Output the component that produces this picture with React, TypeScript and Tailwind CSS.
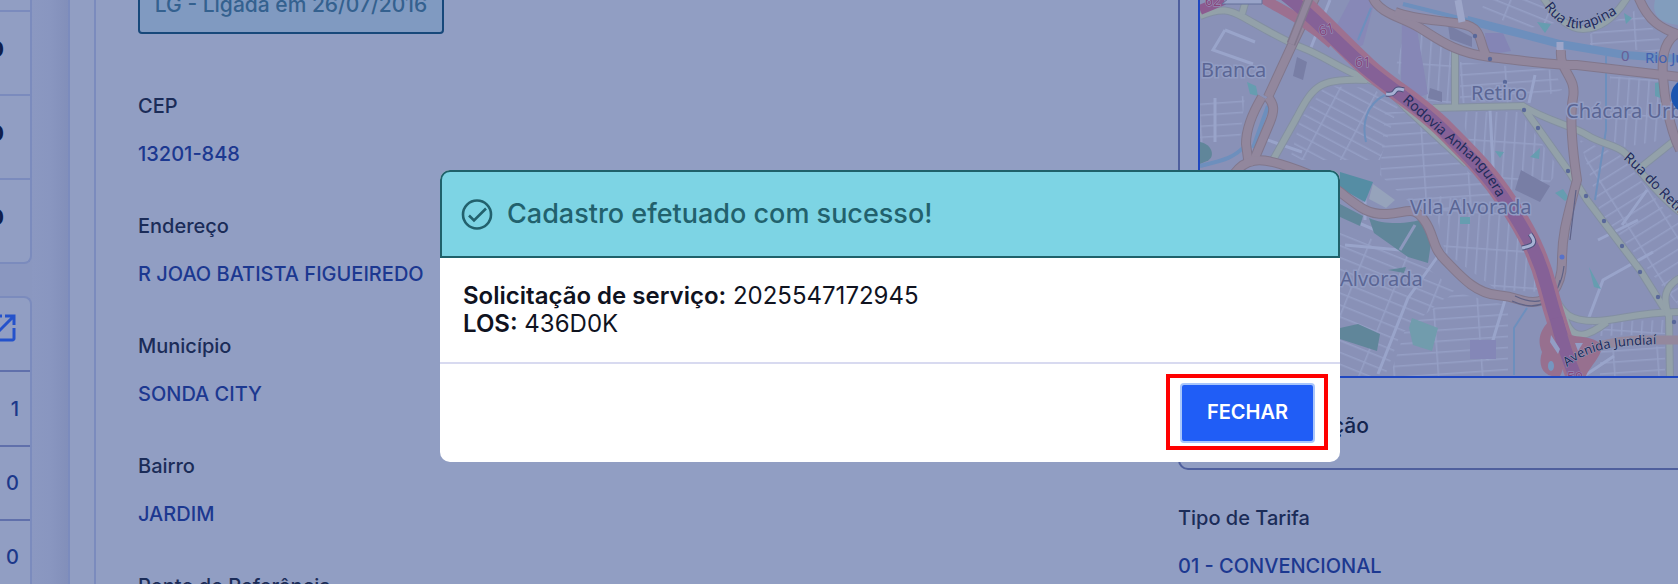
import React from "react";
import { MdOpenInNew } from "react-icons/md";

const details = [
  { label: "CEP", value: "13201-848" },
  { label: "Endereço", value: "R JOAO BATISTA FIGUEIREDO" },
  { label: "Município", value: "SONDA CITY" },
  { label: "Bairro", value: "JARDIM" },
  { label: "Ponto de Referência", value: "" },
];

function Field({ label, value }: { label: string; value: string }) {
  return (
    <div className="flex flex-col gap-6 text-[20px] leading-6 font-medium whitespace-nowrap">
      <dt className="text-[#1b2c58]">{label}</dt>
      <dd className="min-h-6 text-[#1c3890]">{value}</dd>
    </div>
  );
}

function SideTables() {
  return (
    <aside className="flex w-8 shrink-0 flex-col gap-8">
      <div className="h-[264px] overflow-hidden rounded-br-lg border-r-2 border-b-2 border-[#7b8bbd] bg-[#919ec3]">
        <div className="h-3 border-b-2 border-[#7b8bbd]" />
        {[0, 1, 2].map((row) => (
          <div
            key={row}
            className="flex h-[84px] items-center justify-end border-b-2 border-[#7b8bbd] pr-[26px] pb-2 text-[22px] font-bold text-[#0f1f4d]"
          >
            0
          </div>
        ))}
      </div>
      <div className="h-[300px] overflow-hidden rounded-tr-lg border-t-2 border-r-2 border-[#7b8bbd] bg-[#919ec3]">
        <a
          href="#abrir"
          aria-label="Abrir"
          className="flex h-[74px] items-center justify-end border-b-2 border-[#6070ab] pr-[10px] pb-3 text-[#2452cb]"
        >
          <MdOpenInNew className="size-9 shrink-0" />
        </a>
        <table className="w-full text-right text-[20px] font-medium text-[#1c388a]">
          <tbody>
            {["1", "0", "0"].map((n, i) => (
              <tr key={i} className="h-[74px] border-b-2 border-[#6070ab]">
                <td className="pr-[11px]">{n}</td>
              </tr>
            ))}
          </tbody>
        </table>
      </div>
    </aside>
  );
}

const majorRoads = [
  "M1315 -2 L1293 43 L1268 97",
  "M1262 97 C1253 112 1246 128 1246 144 L1249 166",
  "M1268 97 C1274 104 1275 110 1270 122 L1254 160",
  "M1234 174 C1246 158 1260 158 1280 164 S1322 178 1340 192 S1367 215 1387 214 S1413 205 1424 220 S1431 246 1445 260 S1474 293 1497 295 S1519 302 1533 302 S1562 289 1562 262 S1566 222 1577 180 C1574 160 1569 120 1573 98 S1559 72 1561 50",
  "M1373 -2 C1380 14 1402 17 1420 28 S1455 53 1490 57 S1560 66 1577 65 L1680 77",
  "M1395 12 C1415 20 1440 20 1462 24 S1478 42 1487 57",
  "M1638 -4 C1648 22 1662 29 1680 35",
  "M1676 34 C1662 44 1662 62 1663 77 S1668 125 1680 150",
];

const minorRoads = [
  "M1200 16 C1222 7 1230 10 1243 17 S1282 40 1303 48 S1346 72 1367 79 S1394 96 1405 107 L1467 164",
  "M1273 160 L1297 117 C1315 82 1322 79 1367 80",
  "M1246 0 L1242 14",
  "M1455 52 L1455 107",
  "M1433 108 L1523 106 C1545 120 1573 126 1587 135 S1617 145 1625 153 S1652 190 1680 212",
  "M1523 107 L1570 173 L1587 200 L1640 270 L1669 316 L1670 380",
  "M1640 168 L1680 136",
  "M1552 290 C1562 316 1571 321 1595 321 S1635 312 1680 312",
  "M1565 318 C1572 344 1590 335 1607 322",
  "M1680 278 C1665 286 1662 298 1669 316",
  "M1543 -3 C1556 18 1570 29 1583 29 S1612 22 1627 -2",
];

function StreetMap() {
  return (
    <svg
      viewBox="1200 0 478 376"
      preserveAspectRatio="xMinYMin slice"
      className="block h-[376px] w-full"
      fontFamily="'Noto Sans', sans-serif"
      role="img"
      aria-label="Mapa"
    >
      <defs>
        <pattern id="gridA" width="10" height="34" patternUnits="userSpaceOnUse" patternTransform="rotate(-62)">
          <path d="M0 0H10M0 0V34" stroke="#959fc5" strokeWidth="3" fill="none" />
        </pattern>
        <pattern id="gridB" width="40" height="11" patternUnits="userSpaceOnUse" patternTransform="rotate(22)">
          <path d="M0 0H40M0 0V11" stroke="#959fc5" strokeWidth="3" fill="none" />
        </pattern>
        <pattern id="gridC" width="10" height="36" patternUnits="userSpaceOnUse" patternTransform="rotate(4)">
          <path d="M0 0H10M0 0V36" stroke="#959fc5" strokeWidth="3" fill="none" />
        </pattern>
        <pattern id="gridD" width="36" height="11" patternUnits="userSpaceOnUse" patternTransform="rotate(-32)">
          <path d="M0 0H36M0 0V11" stroke="#959fc5" strokeWidth="3" fill="none" />
        </pattern>
        <pattern id="gridE" width="44" height="11" patternUnits="userSpaceOnUse" patternTransform="rotate(-4)">
          <path d="M0 0H44M0 0V11" stroke="#959fc5" strokeWidth="3" fill="none" />
        </pattern>
      </defs>
      <rect x="1200" width="700" height="376" fill="#8991b7" />

      {/* residential street grids */}
      <path d="M1200 98L1245 96 1240 140 1200 146Z" fill="url(#gridE)" />
      <path d="M1300 120L1325 86 1372 88 1398 106 1380 160 1290 160Z" fill="url(#gridA)" />
      <path d="M1385 112L1405 112 1490 192 1500 215 1420 212 1380 175Z" fill="url(#gridE)" />
      <path d="M1408 20L1452 48 1452 104 1425 100 1395 70Z" fill="url(#gridC)" />
      <path d="M1460 62L1555 70 1562 90 1525 103 1460 103Z" fill="url(#gridE)" />
      <path d="M1460 112L1520 112 1560 170 1545 188 1505 190 1470 145Z" fill="url(#gridC)" />
      <path d="M1485 0H1545L1560 22 1530 28 1480 14Z" fill="url(#gridB)" />
      <path d="M1590 34L1640 8 1660 40V52L1590 46Z" fill="url(#gridE)" />
      <path d="M1610 76L1660 80 1664 140 1625 147 1610 140Z" fill="url(#gridC)" />
      <path d="M1580 140L1620 155 1665 210 1678 220V305L1600 212Z" fill="url(#gridD)" />
      <path d="M1340 224L1420 262 1455 290 1400 335 1385 376H1340Z" fill="url(#gridB)" />
      <path d="M1432 195L1508 206 1530 250 1545 292 1497 290 1445 252Z" fill="url(#gridC)" />
      <path d="M1455 292L1508 306 1508 376H1390L1405 330Z" fill="url(#gridE)" />
      <path d="M1600 350L1665 346V376H1600Z" fill="url(#gridE)" />
      <path d="M1590 322L1665 320V334L1600 336Z" fill="url(#gridC)" />
      <g fill="none" stroke="#99a4ca" strokeWidth="3">
        <path d="M1225 30l-12 20 40 14M1225 30l30 12M1340 215l56 24 22-6M1438 256l-30 42-30 76M1365 182v38M1402 250l24-34M1584 376l30-20M1345 245l55 5M1622 225l25-35M1598 240l40-20M1588 320l15-40 50-28M1505 300l-18 60M1330 0l-20 50M1490 110l4 75M1262 138l40 14M1215 98v44M1535 75l-6 28" />
      </g>

      {/* parks and land use */}
      <path d="M1350 0h25l-12 45-18 8-15-15z" fill="#8788b7" />
      <path d="M1402 24h14l12 70-12 4-15-18z" fill="#8687b6" />
      <path d="M1485 33h18l8 18-24 4z" fill="#8485b5" />
      <g fill="#787ea5">
        <path d="M1448 25l24 12v10l-22-8z" />
        <path d="M1297 57l10 5-4 18-10-4z" />
        <path d="M1521 170l29 16-10 16-25-12z" />
        <path d="M1430 88l12 4v10l-14-4z" />
      </g>
      <g fill="#60869a">
        <path d="M1200 142c12 2 16 15 7 19l-7 3z" />
        <path d="M1340 204l23 12-3 10-20-9z" />
        <path d="M1369 218c16 8 45 5 53 1l9 24-3 20-20-6-34-24z" />
        <path d="M1340 328l18-4 22 10-3 17-37-12z" />
        <path d="M1388 270l18-3-2 6z" />
      </g>
      <path d="M1415 225L1400 250" stroke="#8d98bd" strokeWidth="3" />
      <path d="M1340 172l33 10-8 20-25-14z" fill="#558da4" />
      <path d="M1373 184l22 16-9 8-17-9z" fill="#96a3bb" />
      <path d="M1412 318l26 10-6 23-19-6-4-17z" fill="#719cad" />
      <g fill="#669db0">
        <path d="M1537 22l14 2-6 9z" />
        <path d="M1624 13l8 5-6 6z" />
        <path d="M1247 82l9 4 2 10-8-2z" />
        <path d="M1530 157l10-9-1 11z" />
        <path d="M1460 217h10v7h-10z" />
        <path d="M1555 193l8-4 6 9-4 3z" />
        <path d="M1589 267l12 22-7-2z" />
        <path d="M1495 151l9 1-4 6z" />
        <path d="M1655 83l6-1 2 17-8-3z" />
      </g>
      <path d="M1470 340h26v19h-26z" fill="#8487b7" />
      <path d="M1655 0c-4 16 6 23 23 25V0z" fill="#829dbd" />

      {/* water */}
      <g fill="none" stroke="#6d8fbd">
        <path d="M1403 4L1467 20" strokeWidth="4" />
        <path d="M1467 20L1510 31 1560 44 1625 55 1680 59" strokeWidth="8" />
        <path d="M1200 166C1225 160 1234 158 1247 144M1268 106L1253 148" strokeWidth="4" />
        <path d="M1371 8L1358 40M1606 56L1606 130 1595 200M1385 95C1365 105 1362 125 1366 142M1527 308L1514 328V375" strokeWidth="2" />
      </g>

      {/* secondary and primary roads */}
      <g fill="none" stroke="#838fa2" strokeWidth="8">
        {minorRoads.map((d) => <path key={d} d={d} />)}
      </g>
      <g fill="none" stroke="#93a1a9" strokeWidth="6">
        {minorRoads.map((d) => <path key={d} d={d} />)}
      </g>
      <g fill="none" stroke="#81778c" strokeWidth="10">
        {majorRoads.map((d) => <path key={d} d={d} />)}
      </g>
      <g fill="none" stroke="#92879d" strokeWidth="8">
        {majorRoads.map((d) => <path key={d} d={d} />)}
      </g>
      <path d="M1569 362C1592 346 1610 341 1640 340H1680" fill="none" stroke="#94889d" strokeWidth="9" />
      <path d="M1515 296C1540 308 1560 300 1564 266M1512 301C1538 313 1556 301 1560 280M1570 240L1576 190" fill="none" stroke="#5e6287" strokeWidth="1.2" />

      {/* highway */}
      <g fill="none">
        <path d="M1262 -2C1285 12 1305 20 1332 44" stroke="#9c7090" strokeWidth="10" />
        <path d="M1200 10L1224 0" stroke="#8c5b90" strokeWidth="10" />
        <path d="M1290 -8C1312 12 1342 44 1367 67S1417 102 1445 130S1489 174 1508 203S1539 256 1547 287S1562 340 1577 380" stroke="#9e7190" strokeWidth="20" />
        <path d="M1284 -6C1312 15 1342 48 1367 69S1417 104 1445 132S1489 176 1508 205S1539 256 1547 287S1562 340 1577 380" stroke="#856197" strokeWidth="13" />
        <path d="M1310 -4L1291 44" stroke="#81778c" strokeWidth="9" />
        <path d="M1310 -4L1291 44" stroke="#92879d" strokeWidth="6" />
      </g>
      <path
        fill="#97708f"
        d="M1550 320C1538 332 1538 342 1542 352C1538 364 1542 374 1552 376H1560C1566 366 1560 356 1566 376H1586C1590 366 1606 352 1600 344C1594 336 1580 338 1566 334Z"
      />
      <path d="M1556 318C1561 338 1568 360 1577 380" fill="none" stroke="#856197" strokeWidth="13" />
      <g fill="#929dc5">
        <path d="M1551 335l9 14-2 5-8-12zM1575 343h8l-5 8z" />
      </g>
      <ellipse cx="1551" cy="366" rx="3" ry="5" fill="#7596c0" />
      <g fill="none" stroke="#4c527d" strokeWidth="5">
        <path d="M1386 94C1400 96 1390 86 1404 90M1522 248C1532 246 1538 244 1530 234" />
      </g>
      <g fill="none" stroke="#a6b1d4" strokeWidth="3">
        <path d="M1386 94C1400 96 1390 86 1404 90M1522 248C1532 246 1538 244 1530 234" />
      </g>
      <path d="M1458 0L1462 22M1560 42V50" stroke="#9da6c9" strokeWidth="7" />
      <g fill="#59689a">
        {[[1475, 36], [1490, 59], [1505, 82], [1524, 110], [1538, 128], [1568, 171], [1586, 196], [1604, 221], [1622, 246], [1640, 272], [1658, 297], [1674, 322]].map(([x, y]) => (
          <circle key={x} cx={x} cy={y} r="2.2" />
        ))}
      </g>
      <circle cx="1562" cy="257" r="2.5" fill="#5772ca" />

      {/* labels */}
      <g fill="#5b6694" stroke="#929dc4" strokeWidth="3" paintOrder="stroke" fontSize="20">
        <text x="1201" y="77">Branca</text>
        <text x="1471" y="100">Retiro</text>
        <text x="1566" y="118">Chácara Urbana</text>
        <text x="1410" y="214">Vila Alvorada</text>
        <text x="1340" y="286">Alvorada</text>
      </g>
      <g fill="#87467b" stroke="#989bc0" strokeWidth="1" paintOrder="stroke" fontSize="14">
        <text x="1320" y="36" transform="rotate(-14 1320 36)">61</text>
        <text x="1355" y="67">61</text>
        <text x="1567" y="382">50</text>
        <text x="1205" y="6">62</text>
      </g>
      <path d="M1229 -2H1262V4H1222Z" fill="#98a3c8" stroke="#65719b" />
      <text x="1621" y="61" fontSize="15" fill="#685f96">0</text>
      <text x="1645" y="63" fontSize="15" fill="#4261b0">Rio Jundiaí</text>
      <defs>
        <path id="labelAnhanguera" d="M1402 101C1430 126 1455 148 1470 160S1488 185 1520 232" />
        <path id="labelItrapina" d="M1544 7C1568 38 1590 36 1640 -3" />
        <path id="labelRetiro" d="M1623 159C1640 173 1654 191 1690 224" />
        <path id="labelJundiai" d="M1567 367C1588 350 1610 344 1680 344" />
      </defs>
      <g fill="#222b5a" stroke="#939fbc" strokeWidth="1" paintOrder="stroke" fontSize="14">
        <text stroke="none"><textPath href="#labelAnhanguera">Rodovia Anhanguera</textPath></text>
        <text><textPath href="#labelItrapina">Rua Itirapina</textPath></text>
        <text><textPath href="#labelRetiro">Rua do Retiro</textPath></text>
        <text fontSize="13"><textPath href="#labelJundiai">Avenida Jundiaí</textPath></text>
      </g>
      <circle cx="1688" cy="96" r="17" fill="#1c55b0" />
    </svg>
  );
}

function SuccessDialog() {
  return (
    <div className="fixed inset-0 flex items-start justify-center pt-[170px] pl-[102px]">
      <div
        role="dialog"
        aria-modal="true"
        aria-labelledby="dialog-title"
        className="w-full max-w-[900px] rounded-[10px] bg-white"
      >
        <header className="flex h-[88px] items-center gap-[14px] rounded-t-[10px] border-2 border-[#1f616a] bg-[#7dd4e4] pl-[19px] text-[#22616d]">
          <svg viewBox="0 0 32 32" className="size-8" fill="none" stroke="currentColor" strokeWidth="2.6">
            <circle cx="16" cy="16.5" r="14" />
            <path d="M8 17.5l5 5L25 10.5" />
          </svg>
          <h2 id="dialog-title" className="text-[27px] leading-8 font-medium">
            Cadastro efetuado com sucesso!
          </h2>
        </header>
        <div className="border-b-2 border-[#d8daf0] px-[23px] pt-6 pb-6 text-[24px] leading-7 text-[#10131f]">
          <p>
            <strong className="font-semibold">Solicitação de serviço:</strong> 2025547172945
          </p>
          <p>
            <strong className="font-semibold">LOS:</strong> 436D0K
          </p>
        </div>
        <footer className="flex justify-end pt-[10px] pr-3 pb-3">
          <div className="border-4 border-[#ff0000] pt-[5px] pr-[9px] pb-[3px] pl-[10px]">
            <button
              type="button"
              className="h-15 w-[135px] rounded border-2 border-[#a9c6fb] bg-[#205df6] pb-0.5 text-[20px] font-semibold text-white"
            >
              FECHAR
            </button>
          </div>
        </footer>
      </div>
    </div>
  );
}

export default function App() {
  return (
    <div className="h-screen overflow-hidden bg-[#8a97c0] font-['Inter','Liberation_Sans',sans-serif]">
      <div className="flex">
        <SideTables />
        <div className="w-9 shrink-0 bg-linear-to-r from-[#8b98c1] via-[#8996c0] to-[#828fba]" />
        <main className="flex min-w-0 grow border-l-2 border-[#7b8bbd] bg-[#919ec3] pl-6">
          <div className="flex min-w-0 grow border-l-2 border-[#7b8bbd] pl-[42px]">
            <section className="min-w-0 grow">
              <div className="-mt-6 flex h-[58px] w-[306px] items-center justify-center rounded border-2 border-[#17487a] bg-[#809ac1] text-[21px] leading-6 font-medium whitespace-nowrap text-[#34618f]">
                LG - Ligada em 26/07/2016
              </div>
              <dl className="flex flex-col gap-12 pt-15">
                {details.map((d) => (
                  <Field key={d.label} {...d} />
                ))}
              </dl>
            </section>
            <section className="w-[500px] shrink-0">
              <div className="h-[470px] overflow-hidden rounded-bl-[10px] border-b-2 border-l-2 border-[#4f5f9d] pl-[18px]">
                <div className="border-b-2 border-l-2 border-[#1f47c0]">
                  <StreetMap />
                </div>
                <h3 className="pt-9 pl-[134px] text-[21px] leading-6 font-medium text-[#14254f]">ção</h3>
              </div>
              <dl className="pt-9">
                <Field label="Tipo de Tarifa" value="01 - CONVENCIONAL" />
              </dl>
            </section>
          </div>
        </main>
      </div>
      <SuccessDialog />
    </div>
  );
}
